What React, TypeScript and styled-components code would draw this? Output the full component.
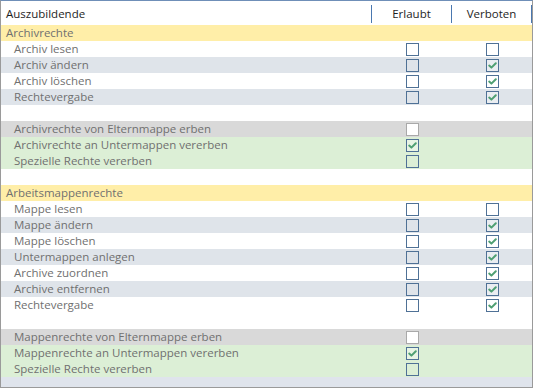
import React from "react";
import styled, { createGlobalStyle, css } from "styled-components";

const Global = createGlobalStyle`
  html, body { margin: 0; padding: 0; background: #ffffff; }
  body { font-family: "Open Sans", "Noto Sans", sans-serif; }
`;

type Tone = "white" | "stripe" | "section" | "inherit" | "pass";

const toneBg: Record<Tone, string> = {
  white: "#ffffff",
  stripe: "#dfe4ea",
  section: "#ffeea8",
  inherit: "#d9d9d9",
  pass: "#dcefd6",
};

const Panel = styled.div`
  width: 533px;
  height: 388px;
  box-sizing: border-box;
  border-top: 1px solid #6f8fb8;
  border-left: 1px solid #9a9a9a;
  border-right: 1px solid #9a9a9a;
  border-bottom: 1px solid #9a9a9a;
  background: #dfe4ec;
  display: flex;
  flex-direction: column;
  overflow: hidden;
`;

const HeaderRow = styled.div`
  display: grid;
  grid-template-columns: 1fr 80px 80px;
  align-items: center;
  height: 24px;
  background: #ffffff;
`;

const HeaderCell = styled.div<{ $center?: boolean }>`
  height: 18px;
  line-height: 18px;
  box-sizing: border-box;
  border-right: 1px solid #4a78b0;
  font-size: 11.5px;
  color: #1e1e1e;
  padding-left: ${(p) => (p.$center ? "0" : "5px")};
  text-align: ${(p) => (p.$center ? "center" : "left")};
  margin-top: 1px;
`;

const Body = styled.div`
  display: flex;
  flex-direction: column;
`;

const Row = styled.div<{ $tone: Tone }>`
  display: grid;
  grid-template-columns: 1fr 80px 80px;
  align-items: center;
  height: 16px;
  background: ${(p) => toneBg[p.$tone]};
`;

const Label = styled.div<{ $indent: boolean }>`
  font-size: 11.5px;
  line-height: 16px;
  color: #707070;
  padding-left: ${(p) => (p.$indent ? "13px" : "5px")};
  white-space: nowrap;
`;

const BoxCell = styled.div`
  display: flex;
  justify-content: center;
  align-items: center;
  height: 16px;
`;

const Box = styled.span<{ $disabled?: boolean; $checked?: boolean }>`
  display: inline-flex;
  align-items: center;
  justify-content: center;
  width: 13px;
  height: 13px;
  box-sizing: border-box;
  margin-top: 1px;
  border: 1px solid #4f7196;
  background: transparent;
  ${(p) =>
    p.$checked &&
    css`
      background: rgba(255, 255, 255, 0.35);
    `}
  ${(p) =>
    p.$disabled &&
    css`
      border-color: #a9a9a9;
      background: #ffffff;
    `}
`;

const Check = () => (
  <svg width="11" height="11" viewBox="0 0 11 11">
    <path d="M2.2 5.6 L4.4 7.6 L8.8 3.2" fill="none" stroke="#4e9f72" strokeWidth="2" strokeLinecap="round" strokeLinejoin="round" />
  </svg>
);

type Cb = null | { checked: boolean; disabled?: boolean };

type RowData = { label: string; tone: Tone; indent: boolean; a: Cb; v: Cb };

const off: Cb = { checked: false };
const on: Cb = { checked: true };
const dis: Cb = { checked: false, disabled: true };

const rows: RowData[] = [
  { label: "Archivrechte", tone: "section", indent: false, a: null, v: null },
  { label: "Archiv lesen", tone: "white", indent: true, a: off, v: off },
  { label: "Archiv ändern", tone: "stripe", indent: true, a: off, v: on },
  { label: "Archiv löschen", tone: "white", indent: true, a: off, v: on },
  { label: "Rechtevergabe", tone: "stripe", indent: true, a: off, v: on },
  { label: "", tone: "white", indent: true, a: null, v: null },
  { label: "Archivrechte von Elternmappe erben", tone: "inherit", indent: true, a: dis, v: null },
  { label: "Archivrechte an Untermappen vererben", tone: "pass", indent: true, a: on, v: null },
  { label: "Spezielle Rechte vererben", tone: "pass", indent: true, a: off, v: null },
  { label: "", tone: "white", indent: true, a: null, v: null },
  { label: "Arbeitsmappenrechte", tone: "section", indent: false, a: null, v: null },
  { label: "Mappe lesen", tone: "white", indent: true, a: off, v: off },
  { label: "Mappe ändern", tone: "stripe", indent: true, a: off, v: on },
  { label: "Mappe löschen", tone: "white", indent: true, a: off, v: on },
  { label: "Untermappen anlegen", tone: "stripe", indent: true, a: off, v: on },
  { label: "Archive zuordnen", tone: "white", indent: true, a: off, v: on },
  { label: "Archive entfernen", tone: "stripe", indent: true, a: off, v: on },
  { label: "Rechtevergabe", tone: "white", indent: true, a: off, v: on },
  { label: "", tone: "white", indent: true, a: null, v: null },
  { label: "Mappenrechte von Elternmappe erben", tone: "inherit", indent: true, a: dis, v: null },
  { label: "Mappenrechte an Untermappen vererben", tone: "pass", indent: true, a: on, v: null },
  { label: "Spezielle Rechte vererben", tone: "pass", indent: true, a: off, v: null },
];

const CheckCell = ({ cb }: { cb: Cb }) => (
  <BoxCell>
    {cb && (
      <Box $checked={cb.checked} $disabled={cb.disabled}>
        {cb.checked && <Check />}
      </Box>
    )}
  </BoxCell>
);

export default function App() {
  return (
    <>
      <Global />
      <Panel>
        <HeaderRow>
          <HeaderCell>Auszubildende</HeaderCell>
          <HeaderCell $center>Erlaubt</HeaderCell>
          <HeaderCell $center>Verboten</HeaderCell>
        </HeaderRow>
        <Body>
          {rows.map((r, i) => (
            <Row key={i} $tone={r.tone}>
              <Label $indent={r.indent}>{r.label}</Label>
              <CheckCell cb={r.a} />
              <CheckCell cb={r.v} />
            </Row>
          ))}
        </Body>
      </Panel>
    </>
  );
}
